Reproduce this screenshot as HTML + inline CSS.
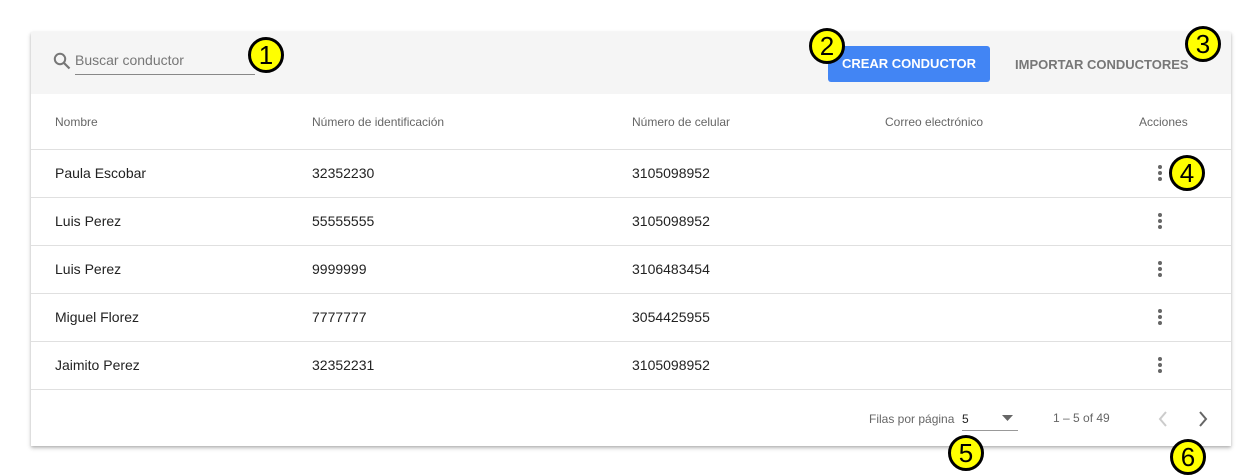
<!DOCTYPE html>
<html><head><meta charset="utf-8"><style>
body{margin:0;width:1256px;height:474px;background:#fff;font-family:"Liberation Sans",sans-serif;position:relative;overflow:hidden}
.card{position:absolute;left:31px;top:32px;width:1200px;height:414px;background:#fff;box-shadow:0 2px 4px rgba(0,0,0,.25),0 1px 2px rgba(0,0,0,.1)}
.bar{position:absolute;left:0;top:0;width:1200px;height:62px;background:#f5f5f5}
.t{position:absolute;font-size:14px;color:#222;white-space:nowrap}
.h{position:absolute;font-size:12px;color:#666;white-space:nowrap}
.line{position:absolute;left:0;width:1200px;height:1px;background:#e0e0e0}
.badge{position:absolute;width:30px;height:30px;border:3px solid #000;border-radius:50%;background:#ffff00;font-size:26px;line-height:30px;text-align:center;color:#000}
.dots{position:absolute;width:4px}
.dots i{display:block;width:4px;height:4px;border-radius:50%;background:#666;margin-bottom:2px}
</style></head><body>
<div class="card">
<div class="bar">
<svg style="position:absolute;left:22px;top:20px" width="18" height="18" viewBox="0 0 18 18"><circle cx="7" cy="7" r="5.2" fill="none" stroke="#777" stroke-width="2"/><line x1="11" y1="11" x2="16.5" y2="16.5" stroke="#777" stroke-width="2.2"/></svg>
<div class="t" style="left:44px;top:20px;color:#777;font-size:14px">Buscar conductor</div>
<div style="position:absolute;left:44px;top:42px;width:180px;height:1px;background:#888"></div>
<div style="position:absolute;left:797px;top:14px;width:162px;height:36px;background:#4285f4;border-radius:3px;color:#fff;font-size:13px;font-weight:bold;line-height:36px;text-align:center">CREAR CONDUCTOR</div>
<div class="t" style="left:984px;top:25px;color:#777;font-weight:bold;font-size:13px">IMPORTAR CONDUCTORES</div>
</div>
<div class="h" style="left:24px;top:83px">Nombre</div>
<div class="h" style="left:281px;top:83px">Número de identificación</div>
<div class="h" style="left:601px;top:83px">Número de celular</div>
<div class="h" style="left:854px;top:83px">Correo electrónico</div>
<div class="h" style="left:1108px;top:83px">Acciones</div>
<div class="line" style="top:117px"></div>
<div class="t" style="left:24px;top:133px">Paula Escobar</div><div class="t" style="left:281px;top:133px">32352230</div><div class="t" style="left:601px;top:133px">3105098952</div>
<div class="dots" style="left:1127px;top:133px"><i></i><i></i><i></i></div>
<div class="line" style="top:165px"></div>
<div class="t" style="left:24px;top:181px">Luis Perez</div><div class="t" style="left:281px;top:181px">55555555</div><div class="t" style="left:601px;top:181px">3105098952</div>
<div class="dots" style="left:1127px;top:181px"><i></i><i></i><i></i></div>
<div class="line" style="top:213px"></div>
<div class="t" style="left:24px;top:229px">Luis Perez</div><div class="t" style="left:281px;top:229px">9999999</div><div class="t" style="left:601px;top:229px">3106483454</div>
<div class="dots" style="left:1127px;top:229px"><i></i><i></i><i></i></div>
<div class="line" style="top:261px"></div>
<div class="t" style="left:24px;top:277px">Miguel Florez</div><div class="t" style="left:281px;top:277px">7777777</div><div class="t" style="left:601px;top:277px">3054425955</div>
<div class="dots" style="left:1127px;top:277px"><i></i><i></i><i></i></div>
<div class="line" style="top:309px"></div>
<div class="t" style="left:24px;top:325px">Jaimito Perez</div><div class="t" style="left:281px;top:325px">32352231</div><div class="t" style="left:601px;top:325px">3105098952</div>
<div class="dots" style="left:1127px;top:325px"><i></i><i></i><i></i></div>
<div class="line" style="top:357px"></div>
<div class="h" style="left:838px;top:380px">Filas por página</div>
<div class="h" style="left:931px;top:380px;color:#222">5</div>
<svg style="position:absolute;left:971px;top:383px" width="12" height="6"><path d="M0 0h11L5.5 6z" fill="#666"/></svg>
<div style="position:absolute;left:931px;top:398px;width:56px;height:1px;background:#999"></div>
<div class="h" style="left:1022px;top:379px">1 – 5 of 49</div>
<svg style="position:absolute;left:1126px;top:378px" width="12" height="18"><path d="M9 2L3 9l6 7" fill="none" stroke="#ccc" stroke-width="2"/></svg>
<svg style="position:absolute;left:1166px;top:378px" width="12" height="18"><path d="M3 2l6 7-6 7" fill="none" stroke="#666" stroke-width="2"/></svg>
</div>
<div class="badge" style="left:248px;top:37px">1</div>
<div class="badge" style="left:809px;top:28px">2</div>
<div class="badge" style="left:1185px;top:26px">3</div>
<div class="badge" style="left:1169px;top:155px">4</div>
<div class="badge" style="left:948px;top:435px">5</div>
<div class="badge" style="left:1170px;top:439px">6</div>
</body></html>
